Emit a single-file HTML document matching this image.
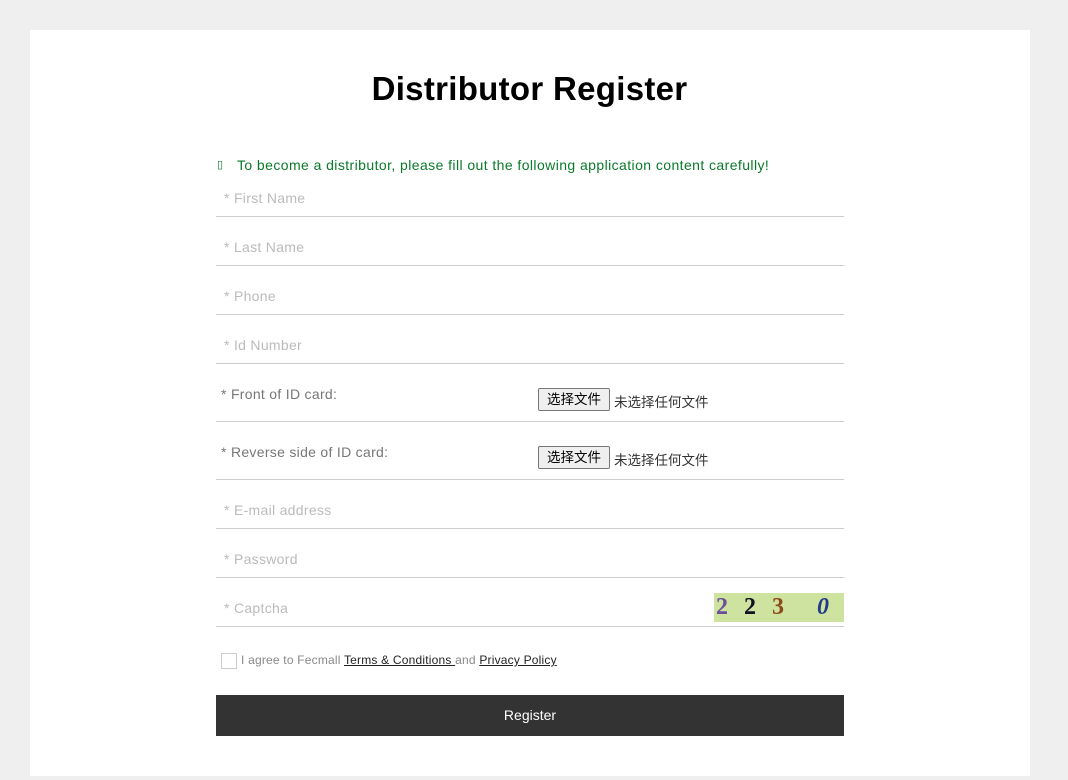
<!DOCTYPE html>
<html><head><meta charset="utf-8"><style>
body{margin:0;background:#efefef;font-family:"Liberation Sans","Noto Sans CJK SC",sans-serif;width:1068px;height:780px;overflow:hidden}
.card{position:absolute;left:30px;top:30px;width:1000px;height:746px;background:#fff}
h1{position:absolute;top:70px;left:0;width:1059px;text-align:center;margin:0;font-size:33px;font-weight:bold;color:#000;letter-spacing:0.3px}
.abs{position:absolute}
.line{position:absolute;left:216px;width:628px;height:1px;background:#ccc}
.ph{position:absolute;left:224px;font-size:14px;color:#bbb;letter-spacing:0.3px}
.lab{position:absolute;left:221px;font-size:14px;color:#777;letter-spacing:0.3px}
.btn{position:absolute;left:538px;width:72px;height:23px;border:1px solid #777;border-radius:2px;background:#efefef;font-size:13.5px;text-align:center;line-height:22px;color:#000;box-sizing:border-box}
.nf{position:absolute;left:614px;font-size:13.5px;color:#333}
</style></head><body>
<div class="card"></div>
<h1>Distributor Register</h1>
<div class="abs" style="left:217px;top:158px;font-size:11px;color:#0a7a2a">▯</div>
<div class="abs" style="left:237px;top:157px;font-size:14px;color:#0a7a2a;letter-spacing:0.42px">To become a distributor, please fill out the following application content carefully!</div>
<div class="ph" style="top:190px">* First Name</div><div class="line" style="top:216px"></div>
<div class="ph" style="top:239px">* Last Name</div><div class="line" style="top:265px"></div>
<div class="ph" style="top:288px">* Phone</div><div class="line" style="top:314px"></div>
<div class="ph" style="top:337px">* Id Number</div><div class="line" style="top:363px"></div>
<div class="lab" style="top:386px">* Front of ID card:</div>
<div class="btn" style="top:388px">选择文件</div><div class="nf" style="top:391px">未选择任何文件</div>
<div class="line" style="top:421px"></div>
<div class="lab" style="top:444px">* Reverse side of ID card:</div>
<div class="btn" style="top:446px">选择文件</div><div class="nf" style="top:449px">未选择任何文件</div>
<div class="line" style="top:479px"></div>
<div class="ph" style="top:502px">* E-mail address</div><div class="line" style="top:528px"></div>
<div class="ph" style="top:551px">* Password</div><div class="line" style="top:577px"></div>
<div class="ph" style="top:600px">* Captcha</div>
<div class="abs" style="left:714px;top:593px;width:130px;height:29px;background:#cfe3a0;font-family:'Liberation Serif',serif;font-weight:bold;font-size:24px;line-height:29px">
<span style="position:absolute;left:2px;color:#6a4f9a">2</span><span style="position:absolute;left:30px;color:#112">2</span><span style="position:absolute;left:58px;color:#8a4a1a">3</span><span style="position:absolute;left:103px;color:#223a8a;font-style:italic">0</span></div>
<div class="line" style="top:626px"></div>
<div class="abs" style="left:221px;top:653px;width:14px;height:14px;border:1px solid #ccc"></div>
<div class="abs" style="left:241px;top:653px;font-size:12px;color:#888;letter-spacing:0.2px">I agree to Fecmall <u style="color:#222">Terms &amp; Conditions </u>and <u style="color:#222">Privacy Policy</u></div>
<div class="abs" style="left:216px;top:695px;width:628px;height:41px;background:#333;color:#fff;font-size:14px;text-align:center;line-height:41px">Register</div>
</body></html>
